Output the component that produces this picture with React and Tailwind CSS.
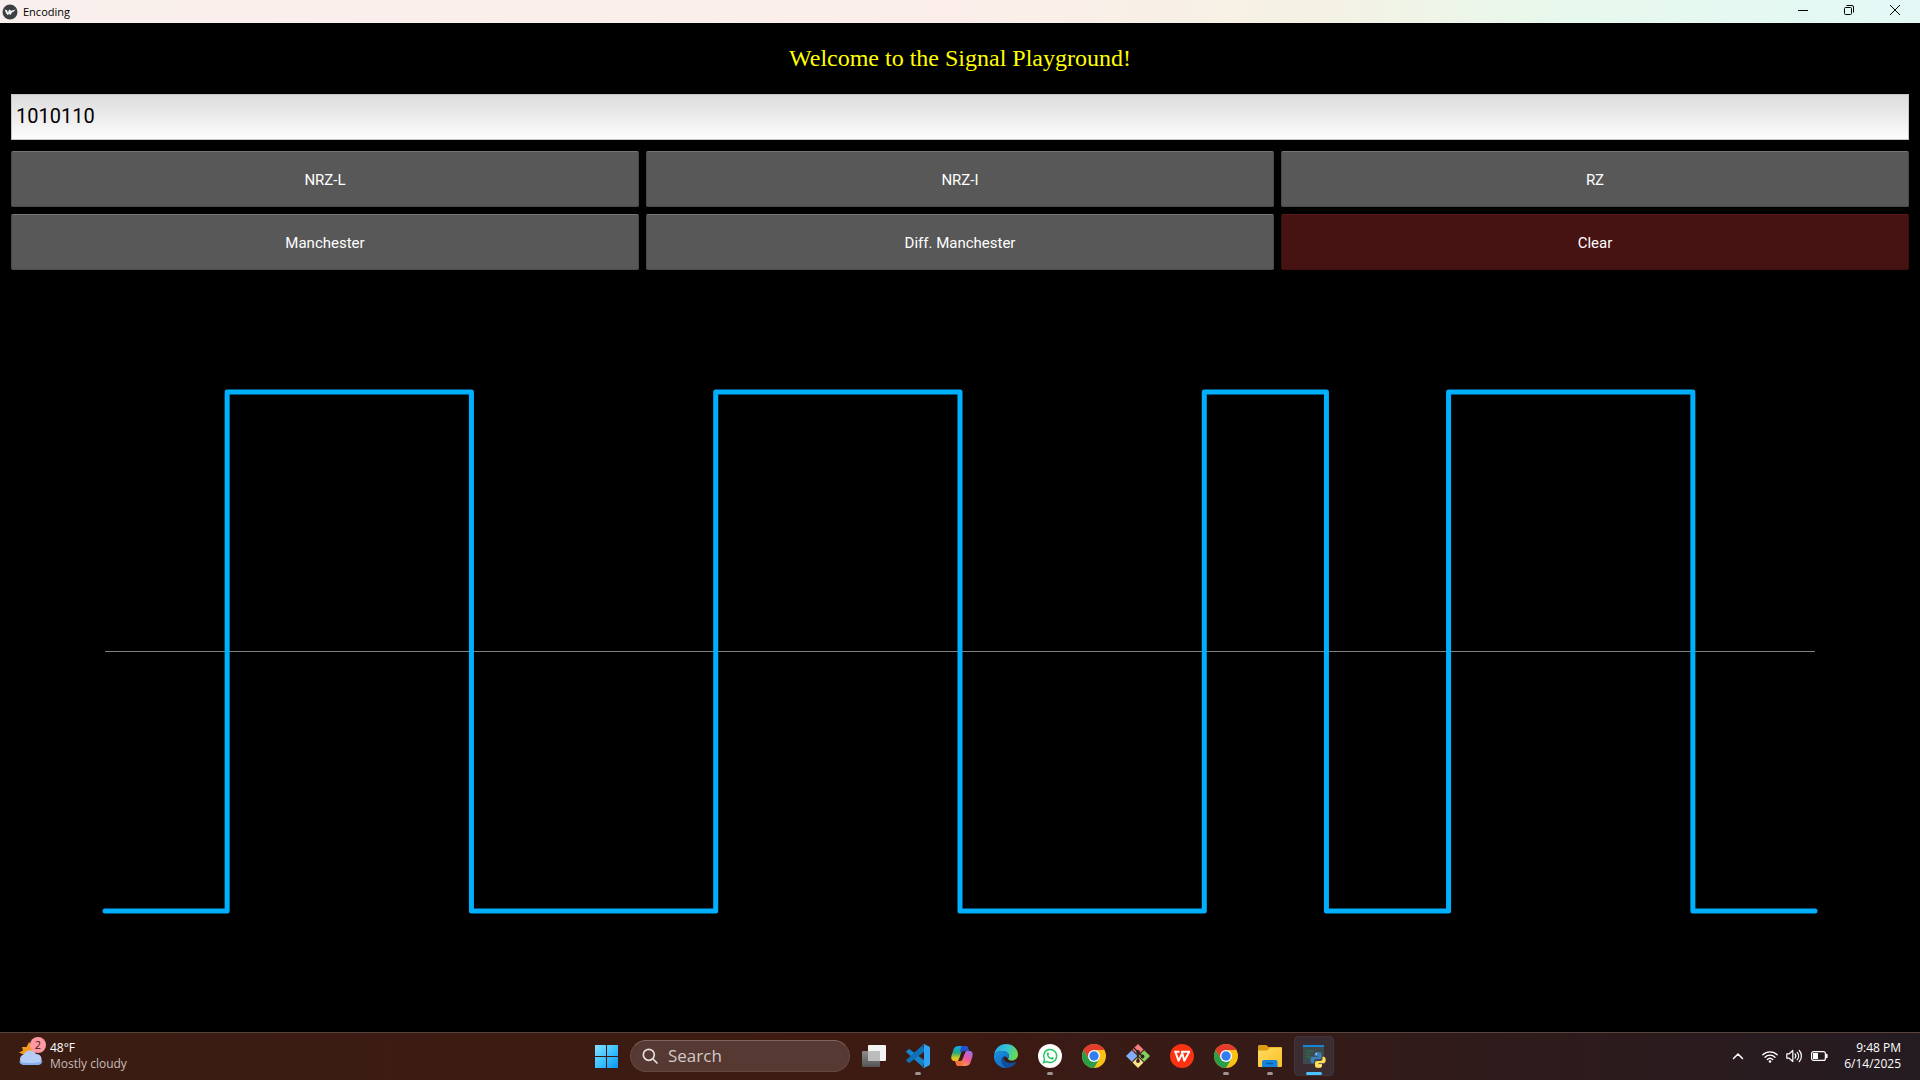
import React, { useState } from "react";

const UI = "font-['Open_Sans','Noto_Sans',sans-serif]";

function WindowIcon() {
  return (
    <svg viewBox="0 0 16 16" className="size-4" aria-hidden="true">
      <circle cx="8" cy="8" r="7.5" fill="#3d4043" />
      <path d="M2.6 5.4 5 6.2l1 2.6 1-3.2 2.3 1.2 4.4-1.2-2.2 2.2-1.6.6-1.6 2.8-1.2-1.6-1.2 1.6-1.6-1.6Z" fill="#f4f4f4" />
    </svg>
  );
}

function TitleBar() {
  return (
    <header className="flex h-[23px] shrink-0 bg-[linear-gradient(to_right,#f9efec_0%,#fbeeea_50%,#f5f1e4_68%,#e7f8ec_82%,#e4f8f3_94%,#e3f7f5_100%)] text-black">
      <div className="flex flex-1 items-center gap-[5px] pl-0.5">
        <WindowIcon />
        <h1 className={`${UI} text-[11px] leading-4`}>Encoding</h1>
      </div>
      <div className="flex pr-0.5">
        <button aria-label="Minimize" className="flex h-5 w-[46px] items-center justify-center">
          <svg viewBox="0 0 10 10" className="size-2.5" fill="none" stroke="currentColor"><path d="M0 5.5h10" /></svg>
        </button>
        <button aria-label="Restore" className="flex h-5 w-[46px] items-center justify-center">
          <svg viewBox="0 0 10 10" className="size-2.5" fill="none" stroke="currentColor">
            <rect x=".5" y="2.5" width="7" height="7" rx="1" />
            <path d="M2.5.5H8A1.5 1.5 0 0 1 9.500 2v5.500" />
          </svg>
        </button>
        <button aria-label="Close" className="flex h-5 w-[46px] items-center justify-center">
          <svg viewBox="0 0 10 10" className="size-2.5" fill="none" stroke="currentColor"><path d="m0 0 10 10M10 0 0 10" /></svg>
        </button>
      </div>
    </header>
  );
}

const SCHEMES = ["NRZ-L", "NRZ-I", "RZ", "Manchester", "Diff. Manchester"];

// Signal level for each half bit: 0 is low, 1 is high.
const LEVELS = [0, 1, 1, 0, 0, 1, 1, 0, 0, 1, 0, 1, 1, 0];

function signalPath(levels) {
  let d = "";
  levels.forEach((level, i) => {
    const y = level ? 0 : 2;
    d += `${i ? "L" : "M"}${i} ${y}L${i + 1} ${y}`;
  });
  return d;
}

function Plot({ levels }) {
  return (
    <section aria-label="Signal plot" className="flex min-h-0 flex-1 px-[105px] pt-[122px] pb-[121px]">
      <svg viewBox="0 0 14 2" preserveAspectRatio="none" className="h-full w-full overflow-visible" fill="none">
        <path d="M0 1H14" stroke="#808080" strokeWidth="1" vectorEffect="non-scaling-stroke" />
        {levels.length > 0 && (
          <path d={signalPath(levels)} stroke="#00b0ff" strokeWidth="5" strokeLinecap="round" strokeLinejoin="round" vectorEffect="non-scaling-stroke" />
        )}
      </svg>
    </section>
  );
}

function WeatherIcon() {
  return (
    <svg viewBox="0 0 28 30" className="h-[30px] w-7" aria-hidden="true">
      <path d="m11 5 2.500 3.500 4 1-1 10-9-1L1 15.500l4-2-1-3.500 4.500 0Z" fill="#f59a1c" />
      <path d="M6 28a5.500 5.500 0 0 1-.3-10.500A7 7 0 0 1 18 17a5.600 5.600 0 0 1 1.500 11Z" fill="#b5cdf6" />
      <path d="M1 24.500A5.500 5.500 0 0 0 6 28h13.500a5 5 0 0 0 5-4c-4 2.500-20 2.500-23.500.5Z" fill="#86aeee" />
    </svg>
  );
}

function StartIcon() {
  return (
    <svg viewBox="0 0 23 23" className="size-[23px]" aria-hidden="true">
      <defs>
        <linearGradient id="win" x1="0" y1="0" x2="23" y2="23" gradientUnits="userSpaceOnUse">
          <stop stopColor="#86e0ff" /><stop offset=".5" stopColor="#3fc3ff" /><stop offset="1" stopColor="#0a94f5" />
        </linearGradient>
      </defs>
      <path d="M0 0h11v11H0zM12 0h11v11H12zM0 12h11v11H0zM12 12h11v11H12z" fill="url(#win)" />
    </svg>
  );
}

function TaskViewIcon() {
  return (
    <svg viewBox="0 0 24 24" className="size-6">
      <defs>
        <linearGradient id="tv" x2="0" y2="1"><stop stopColor="#8b8b8b" /><stop offset="1" stopColor="#555" /></linearGradient>
      </defs>
      <rect x="6" y="1" width="18" height="16" rx="1" fill="#f3f3f3" />
      <rect x="0" y="7" width="18" height="16" rx="1" fill="url(#tv)" />
      <path d="M6 7h12v10H6Z" fill="#bcbcbc" />
    </svg>
  );
}

function CodeIcon() {
  return (
    <svg viewBox="0 0 24 24" className="size-6">
      <path d="M.7 6.800a1.200 1.200 0 0 0 0 1.800L17 23.300l1.500-6.800L3.700 5.300a1.200 1.200 0 0 0-1.500.1Z" fill="#1684cb" />
      <path d="M.7 17.200a1.200 1.200 0 0 1 0-1.800L17 .7l1.500 6.800L3.700 18.700a1.200 1.200 0 0 1-1.500-.1Z" fill="#0d70b8" />
      <path d="M17.500 24a1.500 1.500 0 0 1-1.100-.7c.6.500 1.600.1 1.600-.8V1.500c0-.9-1-1.300-1.600-.8A1.500 1.500 0 0 1 18 .1l5 2.400c.6.300 1 .8 1 1.400v16.200c0 .6-.4 1.100-1 1.400l-5 2.400Z" fill="#2fa4f2" />
    </svg>
  );
}

function CopilotIcon() {
  return (
    <svg viewBox="0 0 24 24" className="size-6">
      <defs>
        <linearGradient id="cpa" x1="6" y1="2" x2="6" y2="17" gradientUnits="userSpaceOnUse">
          <stop stopColor="#19a4ee" /><stop offset=".45" stopColor="#1fa97f" /><stop offset=".8" stopColor="#d5cb22" /><stop offset="1" stopColor="#f5b51c" />
        </linearGradient>
        <linearGradient id="cpb" x1="19" y1="7" x2="12" y2="22" gradientUnits="userSpaceOnUse">
          <stop stopColor="#a66ae8" /><stop offset=".5" stopColor="#f0589a" /><stop offset="1" stopColor="#ff9a4c" />
        </linearGradient>
      </defs>
      <path d="M9 2h6.500c1.400 0 2 .9 2.500 2.300l.8 2.700H14l-3 4-3 6H4.500C1.500 17 .7 14.500 1.700 11L3.500 5.500C4.300 3 6 2 9 2Z" fill="url(#cpa)" />
      <path d="M11.500 2h4c1.400 0 2 .9 2.500 2.300l.8 2.700H14c-1.500 0-2.300.7-2.800 2L10 7Z" fill="#2150cf" />
      <path d="M15 22H8.500C7 22 6.500 21 6 19.700L5.200 17H10l3-4 3-6h3.500c3 0 3.800 2.500 2.800 6l-1.800 5.500C19.700 21 18 22 15 22Z" fill="url(#cpb)" />
      <path d="M12.500 22h-4C7 22 6.500 21 6 19.700L5.200 17H10c1.500 0 2.300-.7 2.800-2l1.200 2Z" fill="#f0743c" />
      <path d="m11 9-2.400 8H10c1.500 0 2.300-.7 2.700-2L15.300 7H14c-1.500 0-2.400.7-3 2Z" fill="#3a1b18" />
    </svg>
  );
}

function EdgeIcon() {
  return (
    <svg viewBox="0 0 24 24" className="size-6">
      <defs>
        <linearGradient id="eda" x1="2" y1="4" x2="23" y2="12" gradientUnits="userSpaceOnUse">
          <stop stopColor="#2aa9e6" /><stop offset=".5" stopColor="#36c6d2" /><stop offset="1" stopColor="#6edc45" />
        </linearGradient>
        <linearGradient id="edb" x1="2" y1="10" x2="12" y2="24" gradientUnits="userSpaceOnUse">
          <stop stopColor="#1a8be0" /><stop offset="1" stopColor="#0f66bb" />
        </linearGradient>
      </defs>
      <path d="M.1 11C.8 4.500 6 0 12 0c7 0 12 5 12 10.500 0 3.800-3 6-6 6-2.500 0-4-1-4-1.800 0-.6 1-.9 1-2.700 0-3-3-5-6.500-5C4.500 7 1.500 8.500.1 11Z" fill="url(#eda)" />
      <path d="M.1 11C1.500 8.300 4.500 7 8.500 7c3.500 0 6.500 2 6.500 5 0 1.800-1 2.100-1 2.700-1-2-3.500-3-5-1.700-3 2.500-1 9 4.500 10.900C6 25-.8 19-.1 11Z" fill="url(#edb)" />
      <path d="M9 13c-3 2.500-1 9 4.500 10.900 4-.5 7-2.400 8.700-5.400.3-.5-.2-.9-.6-.6-5 2.300-9.800.6-11.400-1.900-.8-1.200-.6-2.400-.2-3.300Z" fill="#0d4f9e" />
    </svg>
  );
}

function WhatsAppIcon() {
  return (
    <svg viewBox="0 0 24 24" className="size-6">
      <circle cx="12" cy="12" r="12" fill="#fff" />
      <path d="m5.500 18.700 1-3.500a6.500 6.500 0 1 1 2.400 2.400Z" fill="none" stroke="#23c45e" strokeWidth="1.400" />
      <path d="M9.300 8.600c.5-.5 1-.4 1.200.1l.5 1.200c.1.500-.7 1-.6 1.300.6 1.200 1.500 2 2.700 2.500.4.100.8-.9 1.200-.8l1.300.7c.4.300.1 1.200-.4 1.600-2.500 1.700-7.700-3-5.900-6.600Z" fill="#23c45e" />
    </svg>
  );
}

function ChromeIcon() {
  return (
    <svg viewBox="0 0 24 24" className="size-6">
      <circle cx="12" cy="12" r="12" fill="#fbc116" />
      <path d="M1.610 6A12 12 0 0 1 22.390 6H12l-5.200 9Z" fill="#e33b2e" />
      <path d="M6.800 15 1.610 6A12 12 0 0 0 12 24l5.200-9Z" fill="#2a9d48" />
      <circle cx="12" cy="12" r="6" fill="#fff" />
      <circle cx="12" cy="12" r="4.700" fill="#2f7df0" />
    </svg>
  );
}

function GitIcon() {
  return (
    <svg viewBox="0 0 24 24" className="size-6">
      <path d="m12 0 5.500 5.500L12 11 6.500 5.500Z" fill="#f47f7f" />
      <path d="m5.800 6.200 5.700 5.800-5.700 5.800L0 12Z" fill="#82aef8" />
      <path d="m18.200 6.200 5.800 5.800-5.800 5.800-5.700-5.800Z" fill="#86cf5f" />
      <path d="m12 13 5.500 5.500L12 24l-5.500-5.500Z" fill="#fbe18a" />
      <path d="M8 4l4 4v9M12 8l4.500 4.500" fill="none" stroke="#33201c" strokeWidth="1.400" />
      <circle cx="12" cy="8" r="1.900" fill="#33201c" /><circle cx="16.500" cy="12.500" r="1.900" fill="#33201c" /><circle cx="12" cy="17" r="1.900" fill="#33201c" />
    </svg>
  );
}

function WpsIcon() {
  return (
    <svg viewBox="0 0 24 24" className="size-6">
      <circle cx="12" cy="12" r="12" fill="#fb3313" />
      <path d="M4.300 7.700h5.200M5.300 7.700l3.200 9 3.800-7.500 2 7.500 5-9h-8.300" fill="none" stroke="#fff" strokeWidth="1.900" strokeLinejoin="round" />
    </svg>
  );
}

function FolderIcon() {
  return (
    <svg viewBox="0 0 24 24" className="size-6">
      <defs>
        <linearGradient id="fo" x2="1" y2="1"><stop stopColor="#ffdc62" /><stop offset="1" stopColor="#fbbf26" /></linearGradient>
      </defs>
      <path d="M0 2.500C0 1.700.6 1 1.400 1h6.400c.5 0 .8.200 1.200.6L10.500 3H23a1 1 0 0 1 1 1v6H0Z" fill="#dd9c10" />
      <path d="M0 6.500h8.500c.6 0 1-.2 1.300-.5L12 3.500h11a1 1 0 0 1 1 1V22a1 1 0 0 1-1 1H1a1 1 0 0 1-1-1Z" fill="url(#fo)" />
      <path d="M4 23v-5a2 2 0 0 1 2-2h11.500a2 2 0 0 1 2 2v5Z" fill="#1585dc" />
      <path d="M8.500 19.500h6" stroke="#0b5ba8" strokeWidth="1.400" strokeLinecap="round" />
    </svg>
  );
}

function PythonAppIcon() {
  return (
    <svg viewBox="0 0 24 24" className="size-6">
      <path d="M1 1h21v19H1Z" fill="#3f484d" />
      <path d="M1 1h21v2H1Z" fill="#1784d8" />
      <path d="M3.500 7h8M3.500 10h5M3.500 13h7" stroke="#2e6b45" strokeWidth="1.500" />
      <path d="M16 8c-2.500 0-3.500.7-3.500 2v2H16v.7h-5c-1.600 0-2.500 1.200-2.500 3.300s1 3.300 2.300 3.300H12v-2c0-1.300 1-2.300 2.300-2.300h3.500c1 0 1.700-.8 1.700-1.800V10c0-1.300-1.300-2-3.500-2Z" fill="#3c7fb8" />
      <path d="M16.500 24c2.500 0 3.500-.7 3.500-2v-2h-3.500v-.7h5c1.500 0 2.200-1.200 2.200-3.200 0-2.100-.8-3.300-2.100-3.300H20.500v2c0 1.300-1 2.300-2.300 2.300h-3.400c-1 0-1.800.8-1.800 1.800V22c0 1.300 1.300 2 3.500 2Z" fill="#ffdc55" />
      <circle cx="14.300" cy="10" r=".7" fill="#fff" /><circle cx="18.300" cy="22" r=".7" fill="#fff" />
    </svg>
  );
}

const APPS = [
  { name: "Task View", Icon: TaskViewIcon },
  { name: "Visual Studio Code", Icon: CodeIcon, open: true },
  { name: "Copilot", Icon: CopilotIcon },
  { name: "Edge", Icon: EdgeIcon },
  { name: "WhatsApp", Icon: WhatsAppIcon, open: true },
  { name: "Chrome", Icon: ChromeIcon },
  { name: "Git", Icon: GitIcon },
  { name: "WPS Office", Icon: WpsIcon },
  { name: "Chrome window", Icon: ChromeIcon, open: true },
  { name: "File Explorer", Icon: FolderIcon, open: true },
  { name: "Python", Icon: PythonAppIcon, open: true, active: true },
];

function AppButton({ name, Icon, open, active }) {
  return (
    <button
      aria-label={name}
      className={`relative mx-0.5 flex size-10 items-center justify-center rounded-[4px] ${active ? "border border-[#41343a] bg-[#3a2c30]" : ""}`}
    >
      <Icon />
      {open && (
        <span className={`absolute left-1/2 h-[3px] -translate-x-1/2 rounded-full ${active ? "bottom-0 w-4 bg-[#4cc2ff]" : "bottom-px w-1.5 bg-[#9f9393]"}`} />
      )}
    </button>
  );
}

function Taskbar() {
  return (
    <footer className={`${UI} grid h-12 shrink-0 grid-cols-[1fr_auto_1fr] items-center border-t border-[#57443f] bg-linear-to-r from-[#3a1c13] via-[#3d1a12] via-50% to-[#241b21] pb-px text-white`}>
      <button className="flex items-center gap-1 justify-self-start pl-[18px] text-left">
        <span className="relative mb-2">
          <WeatherIcon />
          <span className="absolute top-0 left-3 flex size-4 items-center justify-center rounded-full bg-[#ff99a4] text-[11px] leading-4 text-[#3a1c13]">2</span>
        </span>
        <span className="text-[12px] leading-4">
          <span className="block">48°F</span>
          <span className="block text-[#c6bbb8]">Mostly cloudy</span>
        </span>
      </button>

      <nav aria-label="Taskbar" className="flex items-center">
        <button aria-label="Start" className="flex h-10 w-11 items-center justify-center"><StartIcon /></button>
        <label className="mx-0.5 flex h-8 w-[220px] items-center gap-[10px] rounded-full border border-[#65483f] border-t-[#7d645e] bg-[#563932] pl-[11px]">
          <svg viewBox="0 0 16 16" className="size-4 shrink-0" fill="none" stroke="#e6dfdd" strokeWidth="1.700" strokeLinecap="round">
            <circle cx="6.800" cy="6.800" r="5.500" /><path d="m11 11 4 4" />
          </svg>
          <input type="text" placeholder="Search" aria-label="Search" className="w-full min-w-0 bg-transparent text-[17px] leading-6 outline-none placeholder:text-[#d3c9c7]" />
        </label>
        {APPS.map((app) => <AppButton key={app.name} {...app} />)}
      </nav>

      <div className="flex items-center justify-self-end pr-[19px]">
        <button aria-label="Show hidden icons" className="mr-[14px] flex w-5 justify-center">
          <svg viewBox="0 0 12 8" className="h-2 w-3" fill="none" stroke="#fff" strokeWidth="1.500" strokeLinecap="round" strokeLinejoin="round"><path d="m1.500 6.500 4.500-4.500 4.500 4.500" /></svg>
        </button>
        <button aria-label="Network, volume and battery" className="mr-4 flex items-center gap-2">
          <svg viewBox="0 0 16 13" className="h-[13px] w-4" fill="none" stroke="#fff" strokeWidth="1.300" strokeLinecap="round">
            <path d="M.8 4.800a10.200 10.200 0 0 1 14.400 0M3 7.200a7 7 0 0 1 10 0M5.300 9.500a3.900 3.900 0 0 1 5.400 0" />
            <circle cx="8" cy="11.500" r="1.300" fill="#fff" stroke="none" />
          </svg>
          <svg viewBox="0 0 17 14" className="h-3.5 w-[17px]" fill="none" stroke="#fff" strokeWidth="1.200" strokeLinecap="round" strokeLinejoin="round">
            <path d="M.8 4.800h2.400L6.800 1.500v11L3.200 9.200H.8ZM9 5a3 3 0 0 1 0 4M11.200 3.300a5.500 5.500 0 0 1 0 7.400M13.300 1.500a8.200 8.200 0 0 1 0 11" />
          </svg>
          <svg viewBox="0 0 17 10" className="h-2.5 w-[17px]" fill="none" stroke="#fff">
            <rect x=".6" y=".6" width="13.800" height="8.800" rx="2" strokeWidth="1.200" />
            <path d="M2 2h5v6H2Z" fill="#fff" stroke="none" /><path d="M15.800 3.500v3" strokeWidth="1.600" strokeLinecap="round" />
          </svg>
        </button>
        <button className="text-right text-[12px] leading-4">
          <time className="block">9:48 PM</time>
          <time className="block">6/14/2025</time>
        </button>
      </div>
    </footer>
  );
}

export default function App() {
  const [bits, setBits] = useState("1010110");
  const [levels, setLevels] = useState(LEVELS);
  const clear = () => {
    setBits("");
    setLevels([]);
  };
  return (
    <div className="flex h-screen min-w-0 flex-col bg-black">
      <TitleBar />
      <main className="flex min-h-0 flex-1 flex-col">
        <div className="flex flex-col px-[11px]">
          <h2 className="py-5 text-center font-['Georgia','Liberation_Serif',serif] text-[24px] leading-[31px] text-[#ffff00]">
            Welcome to the Signal Playground!
          </h2>
          <input
            type="text"
            aria-label="Bit sequence"
            value={bits}
            onChange={(e) => setBits(e.target.value)}
            className="h-[46px] w-full border border-[#c4c4c4] bg-linear-to-b from-[#dcdcdc] to-[#fdfdfd] px-1 pb-0.5 font-['Roboto',sans-serif] text-[20px] leading-6 text-black outline-none"
          />
          <div className="mt-[11px] grid grid-cols-3 gap-x-[7px] gap-y-[7px] font-['Roboto',sans-serif] text-[15px] leading-5 text-white">
            {SCHEMES.map((s) => (
              <button key={s} onClick={() => setLevels(LEVELS)} className="h-14 rounded-[2px] border border-[#4b4b4b] border-t-[#757575] bg-[#585858] pt-0.5">
                {s}
              </button>
            ))}
            <button onClick={clear} className="h-14 rounded-[2px] border border-[#3a1010] border-t-[#5e1818] bg-[#461212] pt-0.5">
              Clear
            </button>
          </div>
        </div>
        <Plot levels={levels} />
      </main>
      <Taskbar />
    </div>
  );
}
